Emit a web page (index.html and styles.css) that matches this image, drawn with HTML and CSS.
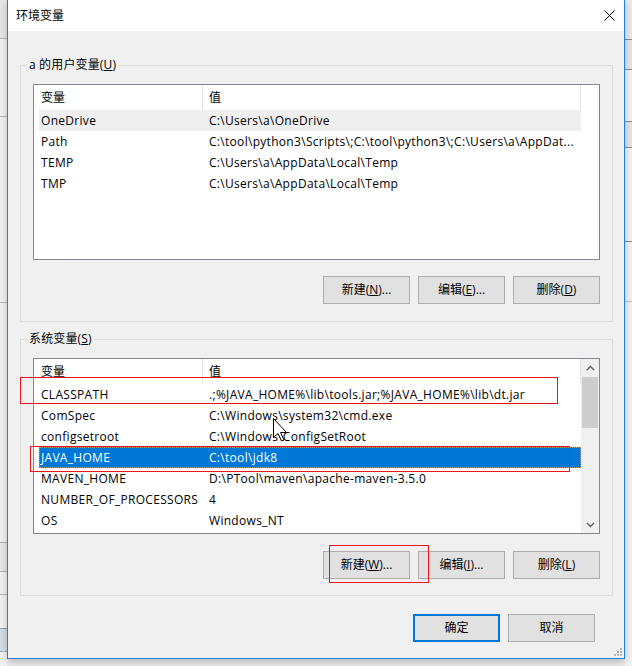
FILE: index.html
```html
<!DOCTYPE html>
<html lang="zh-CN">
<head>
<meta charset="utf-8">
<title>环境变量</title>
<link rel="stylesheet" href="styles.css">
</head>
<body>
<div class="screen">
  <div class="side side-left">
    <div class="seg seg-a"></div>
    <div class="seg seg-b"></div>
    <div class="seg seg-c"></div>
    <div class="seg seg-d"></div>
    <div class="seg seg-e"></div>
    <div class="seg seg-f"></div>
    <div class="seg seg-g"></div>
    <div class="seg seg-h"></div>
  </div>

  <div class="window">
    <div class="titlebar">
      <span class="title">环境变量</span>
      <svg class="close" width="11" height="11" viewBox="0 0 11 11"><path d="M0.5 0.5L10.5 10.5M10.5 0.5L0.5 10.5" stroke="#000" stroke-width="1" fill="none"/></svg>
    </div>

    <div class="client">
      <fieldset class="group group-user">
        <legend>a 的用户变量(<u>U</u>)</legend>
        <div class="list">
          <div class="list-body">
            <div class="list-header">
              <div class="hcol hcol-name">变量</div>
              <div class="hcol hcol-value">值</div>
            </div>
            <div class="row row-hover"><div class="cell-name">OneDrive</div><div class="cell-value">C:\Users\a\OneDrive</div></div>
            <div class="row"><div class="cell-name">Path</div><div class="cell-value">C:\tool\python3\Scripts\;C:\tool\python3\;C:\Users\a\AppDat...</div></div>
            <div class="row"><div class="cell-name">TEMP</div><div class="cell-value">C:\Users\a\AppData\Local\Temp</div></div>
            <div class="row"><div class="cell-name">TMP</div><div class="cell-value">C:\Users\a\AppData\Local\Temp</div></div>
          </div>
          <div class="list-filler"></div>
        </div>
        <div class="btn-row">
          <button class="btn">新建(<u>N</u>)...</button>
          <button class="btn">编辑(<u>E</u>)...</button>
          <button class="btn">删除(<u>D</u>)</button>
        </div>
      </fieldset>

      <fieldset class="group group-sys">
        <legend>系统变量(<u>S</u>)</legend>
        <div class="list">
          <div class="list-body">
            <div class="list-header">
              <div class="hcol hcol-name">变量</div>
              <div class="hcol hcol-value">值</div>
            </div>
            <div class="row"><div class="cell-name">CLASSPATH</div><div class="cell-value">.;%JAVA_HOME%\lib\tools.jar;%JAVA_HOME%\lib\dt.jar</div></div>
            <div class="row"><div class="cell-name">ComSpec</div><div class="cell-value">C:\Windows\system32\cmd.exe</div></div>
            <div class="row"><div class="cell-name">configsetroot</div><div class="cell-value">C:\Windows\ConfigSetRoot</div></div>
            <div class="row row-selected"><div class="cell-name">JAVA_HOME</div><div class="cell-value">C:\tool\jdk8</div></div>
            <div class="row"><div class="cell-name">MAVEN_HOME</div><div class="cell-value">D:\PTool\maven\apache-maven-3.5.0</div></div>
            <div class="row"><div class="cell-name">NUMBER_OF_PROCESSORS</div><div class="cell-value">4</div></div>
            <div class="row"><div class="cell-name">OS</div><div class="cell-value">Windows_NT</div></div>
          </div>
          <div class="scrollbar">
            <div class="sb-btn"><svg width="9" height="6" viewBox="0 0 9 6"><path d="M1 5L4.5 1.5L8 5" stroke="#606060" stroke-width="1.4" fill="none"/></svg></div>
            <div class="sb-track"><div class="sb-thumb"></div></div>
            <div class="sb-btn"><svg width="9" height="6" viewBox="0 0 9 6"><path d="M1 1L4.5 4.5L8 1" stroke="#606060" stroke-width="1.4" fill="none"/></svg></div>
          </div>
        </div>
        <div class="btn-row btn-row-sys">
          <button class="btn">新建(<u>W</u>)...</button>
          <button class="btn">编辑(<u>I</u>)...</button>
          <button class="btn">删除(<u>L</u>)</button>
        </div>
      </fieldset>

      <div class="dlg-row">
        <button class="btn btn-default">确定</button>
        <button class="btn">取消</button>
      </div>
    </div>

    <svg class="grip" width="10" height="10" viewBox="0 0 10 10">
      <rect x="7" y="1" width="2" height="2" fill="#b8b8b8"/>
      <rect x="4" y="4" width="2" height="2" fill="#b8b8b8"/>
      <rect x="7" y="4" width="2" height="2" fill="#b8b8b8"/>
      <rect x="1" y="7" width="2" height="2" fill="#b8b8b8"/>
      <rect x="4" y="7" width="2" height="2" fill="#b8b8b8"/>
      <rect x="7" y="7" width="2" height="2" fill="#b8b8b8"/>
    </svg>
  </div>

  <div class="side side-right">
    <div class="rseg rseg-a"></div>
    <div class="rseg rseg-b"></div>
    <div class="rseg rseg-c"></div>
    <div class="rseg rseg-d"></div>
    <div class="rseg rseg-e"></div>
    <div class="rseg rseg-f"></div>
  </div>

  <div class="mark mark-classpath"></div>
  <div class="mark mark-javahome"></div>
  <div class="mark mark-new"></div>

  <svg class="cursor" width="15" height="24" viewBox="0 0 15 24">
    <path d="M0.5 0.5L0.5 19.5L5 15.5L8.5 23L11 22L7.5 14.5L13.5 14.5Z" fill="#fff" stroke="#000" stroke-width="1" stroke-linejoin="miter"/>
  </svg>
</div>
</body>
</html>
```

FILE: styles.css
```css
* {
  box-sizing: border-box;
}

html, body {
  margin: 0;
  padding: 0;
}

body {
  width: 632px;
  height: 666px;
  overflow: hidden;
  background: #dcdcdc;
  font-family: "Open Sans", "Noto Sans CJK SC", sans-serif;
  font-size: 12px;
  color: #000;
}

.screen {
  position: relative;
  display: flex;
  align-items: flex-start;
  width: 632px;
  height: 666px;
  background: linear-gradient(#e2e2e2, #ececec);
}

/* ---------- outside strips ---------- */
.side {
  width: 7px;
  height: 666px;
  display: flex;
  flex-direction: column;
  background: #f2f2f2;
}

.seg {
  border-bottom: 1px solid #b4b4b4;
}

.seg-a { height: 39px; background: #e6e6e6; }
.seg-b { height: 78px; }
.seg-c { height: 186px; }
.seg-d { height: 240px; }
.seg-e { height: 29px; background: #e9e9e9; }
.seg-f { height: 23px; }
.seg-g { height: 34px; border-bottom-color: #999; }
.seg-h { height: 23px; background: #d6dde6; border-bottom: 1px dashed #9aa; }

.rseg {
  border-bottom: 1px solid #8a8a8a;
}

.rseg-a { height: 40px; background: #eaeaea; }
.rseg-b { height: 30px; background: #e4e4e4; }
.rseg-c { height: 52px; }
.rseg-d { height: 26px; background: #e4e4e4; }
.rseg-e { height: 94px; }
.rseg-f { height: 60px; border-bottom-color: #c4c4c4; }

/* ---------- window ---------- */
.window {
  position: relative;
  width: 618px;
  height: 659px;
  border: 1px solid #1883d7;
  border-top: none;
  background: #f0f0f0;
  display: flex;
  flex-direction: column;
  box-shadow: 0 3px 8px rgba(0, 0, 0, 0.22);
}

.titlebar {
  height: 31px;
  flex: none;
  background: #fff;
  display: flex;
  align-items: center;
  justify-content: space-between;
  padding: 0 9px 0 8px;
}

.title {
  line-height: 16px;
}

.close {
  display: block;
}

.client {
  flex: 1;
  display: flex;
  flex-direction: column;
  padding: 26px 11px 0 12px;
}

/* ---------- group boxes ---------- */
.group {
  margin: 0;
  min-width: 0;
  border: 1px solid #dcdcdc;
  padding: 11px 12px 17px 12px;
}

.group legend {
  height: 16px;
  line-height: 16px;
  padding: 0 2px;
  margin-left: -6px;
  letter-spacing: 0.15px;
}

.group-sys {
  margin-top: 9px;
  padding-bottom: 16px;
}

/* ---------- list views ---------- */
.list {
  height: 176px;
  border: 1px solid #828790;
  background: #fff;
  display: flex;
}

.list-body {
  width: 547px;
  flex: none;
  display: flex;
  flex-direction: column;
}

.list-filler {
  flex: 1;
}

.list-header {
  height: 25px;
  display: flex;
}

.hcol {
  height: 25px;
  line-height: 25px;
  border-right: 1px solid #e5e5e5;
}

.hcol-name {
  width: 169px;
  padding-left: 7px;
}

.hcol-value {
  width: 378px;
  padding-left: 6px;
}

.row {
  display: flex;
  width: 542px;
  height: 21px;
  line-height: 21px;
  margin-left: 5px;
  white-space: nowrap;
  letter-spacing: 0.3px;
}

.cell-name {
  width: 163px;
  flex: none;
  padding-left: 2px;
  overflow: hidden;
}

.cell-value {
  flex: 1;
  padding-left: 7px;
  overflow: hidden;
}

.row-hover {
  background: #efefef;
}

.row-selected {
  background: #0078d7;
  color: #fff;
  outline: 1px dotted rgba(242, 168, 90, 0.75);
  outline-offset: -1px;
}

/* ---------- scrollbar ---------- */
.scrollbar {
  flex: 1;
  background: #f0f0f0;
  display: flex;
  flex-direction: column;
}

.sb-btn {
  height: 17px;
  flex: none;
  display: flex;
  align-items: center;
  justify-content: center;
}

.sb-btn svg {
  display: block;
}

.sb-track {
  flex: 1;
  padding: 1px 1px 0 1px;
}

.sb-thumb {
  height: 51px;
  background: #cdcdcd;
}

/* ---------- buttons ---------- */
.btn-row {
  display: flex;
  justify-content: flex-end;
  gap: 8px;
  margin-top: 16px;
}

.btn-row-sys {
  margin-top: 17px;
}

.btn {
  width: 87px;
  height: 28px;
  margin: 0;
  padding: 0;
  border: 1px solid #adadad;
  background: #e1e1e1;
  font-family: inherit;
  font-size: 12px;
  line-height: 16px;
  color: #000;
}

.btn-default {
  border: 2px solid #0078d7;
}

.dlg-row {
  display: flex;
  justify-content: flex-end;
  gap: 8px;
  margin-top: 18px;
  padding-right: 18px;
}

.grip {
  position: absolute;
  right: 1px;
  bottom: 1px;
}

/* ---------- annotations drawn over the screenshot ---------- */
.mark {
  position: absolute;
  border: 1px solid #e8141b;
}

.mark-classpath {
  left: 20px;
  top: 377px;
  width: 538px;
  height: 27px;
}

.mark-javahome {
  left: 30px;
  top: 446px;
  width: 540px;
  height: 26px;
}

.mark-new {
  left: 329px;
  top: 545px;
  width: 100px;
  height: 38px;
}

.cursor {
  position: absolute;
  left: 273px;
  top: 418px;
}
```
